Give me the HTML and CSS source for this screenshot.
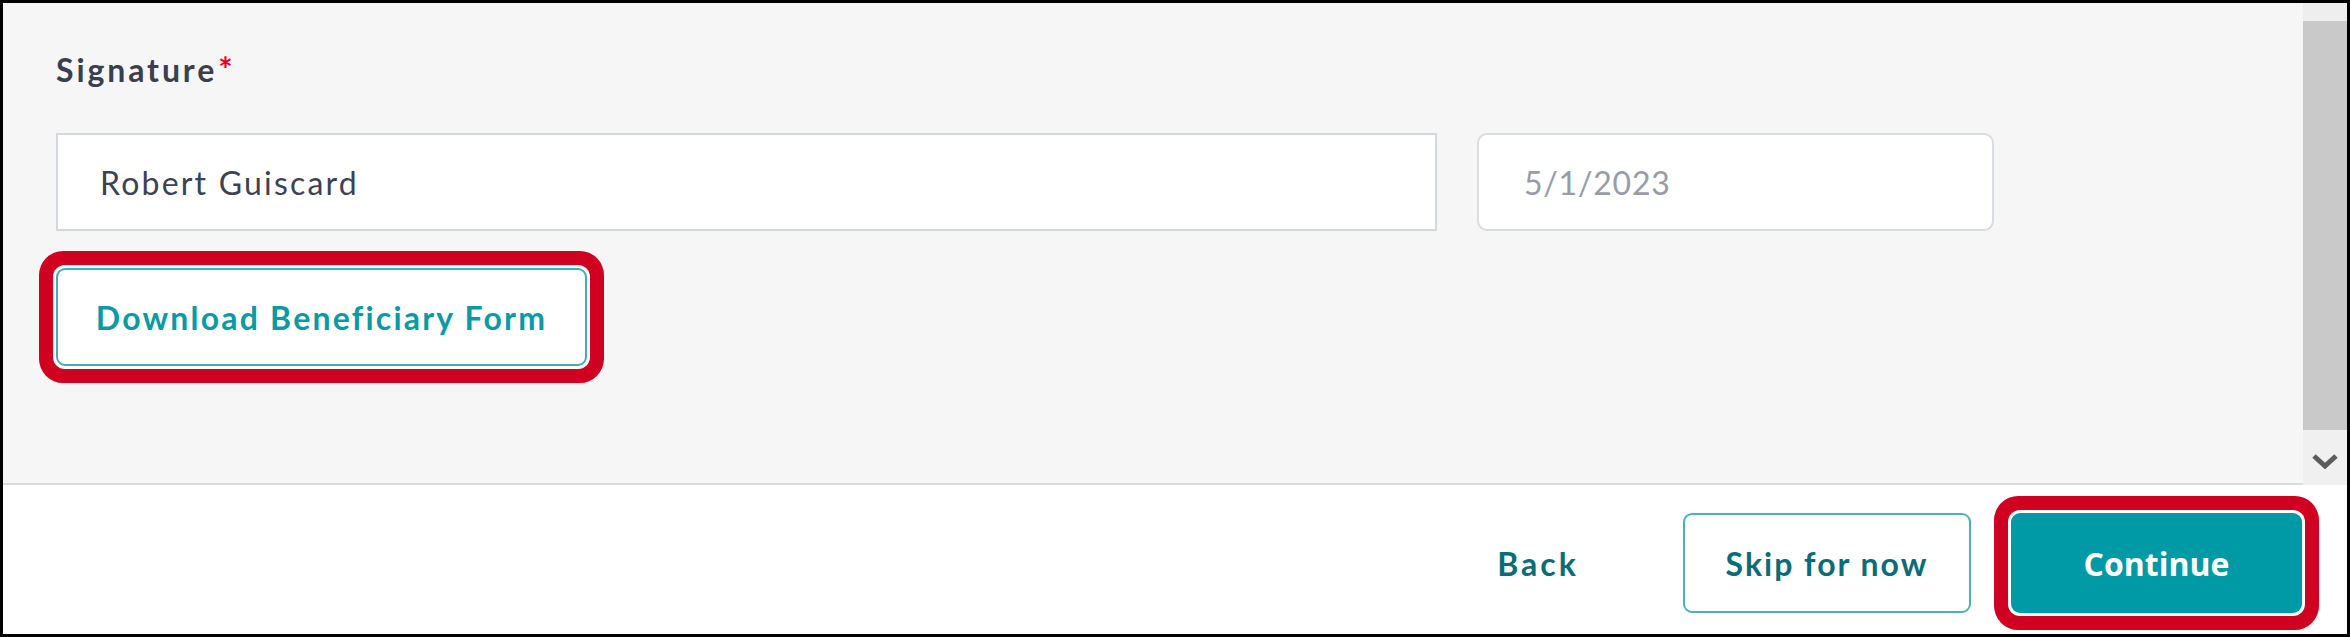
FILE: index.html
```html
<!DOCTYPE html>
<html lang="en">
<head>
<meta charset="utf-8">
<title>Signature</title>
<link rel="stylesheet" href="styles.css">
</head>
<body>
<div class="frame">
  <div class="main">
    <div class="content">
      <div class="label">Signature<span class="req">*</span></div>
      <div class="fields">
        <div class="field name-field">Robert Guiscard</div>
        <div class="field date-field">5/1/2023</div>
      </div>
      <button class="btn btn-outline btn-download highlight">Download Beneficiary Form</button>
    </div>
    <div class="scrollbar">
      <div class="sb-top"></div>
      <div class="sb-thumb"></div>
      <div class="sb-bottom">
        <svg class="sb-arrow" width="26" height="16" viewBox="0 0 26 16"><polyline points="2,3 13,13 24,3" fill="none" stroke="#5c5c5c" stroke-width="5" stroke-linejoin="miter"/></svg>
      </div>
    </div>
  </div>
  <div class="footer">
    <button class="btn btn-text">Back</button>
    <button class="btn btn-outline btn-skip">Skip for now</button>
    <button class="btn btn-primary highlight">Continue</button>
  </div>
</div>
</body>
</html>
```
FILE: styles.css
```css
html, body {
  margin: 0;
  padding: 0;
  background: #ffffff;
}

.frame {
  width: 2350px;
  height: 637px;
  box-sizing: border-box;
  border: 3px solid #000000;
  display: flex;
  flex-direction: column;
  font-family: "Lato", "Liberation Sans", sans-serif;
}

.main {
  height: 482px;
  display: flex;
  flex-direction: row;
}

.content {
  flex: 1;
  background: #f6f6f6;
  border-bottom: 2px solid #dcdcdc;
  padding: 46px 0 0 53px;
  box-sizing: border-box;
}

.label {
  font-size: 32px;
  line-height: 40px;
  font-weight: 700;
  color: #3a3f4e;
  letter-spacing: 2.9px;
  margin-bottom: 43px;
}

.req {
  color: #e2002b;
  margin-left: 1px;
  font-size: 34px;
  letter-spacing: 0;
}

.fields {
  display: flex;
  gap: 40px;
  margin-bottom: 37px;
}

.field {
  height: 98px;
  box-sizing: border-box;
  background: #ffffff;
  display: flex;
  align-items: center;
  font-size: 32px;
  letter-spacing: 2.2px;
}

.name-field {
  width: 1381px;
  border: 2px solid #d4d7db;
  padding-left: 42px;
  color: #3d4251;
}

.date-field {
  width: 517px;
  border: 2px solid #d9dce0;
  border-radius: 10px;
  padding-left: 45px;
  color: #979ca5;
  letter-spacing: 0.8px;
}

.btn {
  font-family: "Lato", "Liberation Sans", sans-serif;
  font-size: 32px;
  font-weight: 700;
  height: 98px;
  box-sizing: border-box;
  border-radius: 9px;
  padding: 0;
  cursor: pointer;
}

.btn-outline {
  background: #ffffff;
  border: 2px solid #44adb5;
}

.btn-download {
  width: 531px;
  color: #0b9aa4;
  letter-spacing: 2.2px;
  display: block;
}

.highlight {
  box-shadow: 0 0 0 3px #ffffff, 0 0 0 17px #cf0020;
}

.scrollbar {
  width: 44px;
  display: flex;
  flex-direction: column;
}

.sb-top {
  height: 18px;
  background: #eeeeee;
}

.sb-thumb {
  height: 409px;
  background: #c9c9c9;
}

.sb-bottom {
  flex: 1;
  background: #f0f0f0;
  display: flex;
  justify-content: center;
  align-items: flex-start;
  padding-top: 23px;
}

.footer {
  flex: 1;
  background: #ffffff;
  display: flex;
  justify-content: flex-end;
  align-items: flex-start;
  padding: 28px 45px 0 0;
  gap: 40px;
}

.footer .btn {
  height: 100px;
}

.btn-text {
  background: transparent;
  border: none;
  color: #0c6c76;
  width: 200px;
  letter-spacing: 3px;
  margin-right: 5px;
}

.btn-skip {
  width: 288px;
  color: #0c6c76;
  letter-spacing: 2px;
  border-color: #4cb1b9;
}

.btn-primary {
  width: 291px;
  background: #009aa6;
  border: none;
  color: #ffffff;
  font-family: "Open Sans", "Liberation Sans", sans-serif;
  letter-spacing: 0;
}
```
